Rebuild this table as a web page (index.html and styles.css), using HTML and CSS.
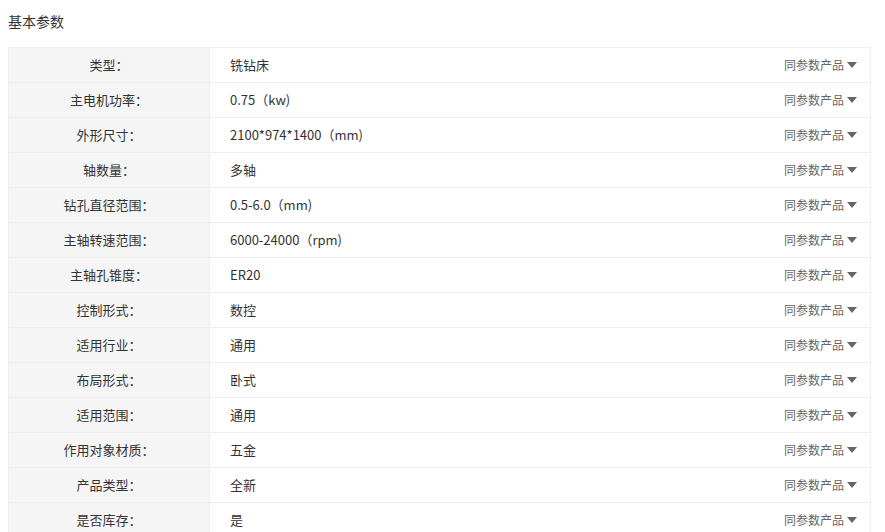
FILE: index.html
```html
<!DOCTYPE html>
<html lang="zh">
<head>
<meta charset="utf-8">
<link rel="stylesheet" href="styles.css">
</head>
<body>
<div class="title">基本参数</div>
<table class="params">
<tr><td class="k">类型：</td><td class="v"><span>铣钻床</span><span class="same">同参数产品<i class="tri"></i></span></td></tr>
<tr><td class="k">主电机功率：</td><td class="v"><span>0.75（kw)</span><span class="same">同参数产品<i class="tri"></i></span></td></tr>
<tr><td class="k">外形尺寸：</td><td class="v"><span>2100*974*1400（mm)</span><span class="same">同参数产品<i class="tri"></i></span></td></tr>
<tr><td class="k">轴数量：</td><td class="v"><span>多轴</span><span class="same">同参数产品<i class="tri"></i></span></td></tr>
<tr><td class="k">钻孔直径范围：</td><td class="v"><span>0.5-6.0（mm)</span><span class="same">同参数产品<i class="tri"></i></span></td></tr>
<tr><td class="k">主轴转速范围：</td><td class="v"><span>6000-24000（rpm)</span><span class="same">同参数产品<i class="tri"></i></span></td></tr>
<tr><td class="k">主轴孔锥度：</td><td class="v"><span>ER20</span><span class="same">同参数产品<i class="tri"></i></span></td></tr>
<tr><td class="k">控制形式：</td><td class="v"><span>数控</span><span class="same">同参数产品<i class="tri"></i></span></td></tr>
<tr><td class="k">适用行业：</td><td class="v"><span>通用</span><span class="same">同参数产品<i class="tri"></i></span></td></tr>
<tr><td class="k">布局形式：</td><td class="v"><span>卧式</span><span class="same">同参数产品<i class="tri"></i></span></td></tr>
<tr><td class="k">适用范围：</td><td class="v"><span>通用</span><span class="same">同参数产品<i class="tri"></i></span></td></tr>
<tr><td class="k">作用对象材质：</td><td class="v"><span>五金</span><span class="same">同参数产品<i class="tri"></i></span></td></tr>
<tr><td class="k">产品类型：</td><td class="v"><span>全新</span><span class="same">同参数产品<i class="tri"></i></span></td></tr>
<tr><td class="k">是否库存：</td><td class="v"><span>是</span><span class="same">同参数产品<i class="tri"></i></span></td></tr>
</table>
</body>
</html>
```
FILE: styles.css
```css
html, body {
  margin: 0;
  padding: 0;
  background: #fff;
}
body {
  padding: 8px;
  font-family: "Microsoft YaHei", "Noto Sans CJK SC", "Noto Sans", sans-serif;
  color: #333;
  font-size: 13px;
}
.title {
  font-size: 14px;
  line-height: 26px;
  margin-bottom: 13px;
  color: #333;
}
.params {
  width: 863px;
  border-collapse: collapse;
  table-layout: fixed;
}
.params td {
  border: 1px solid #eeeeee;
  height: 34px;
  padding: 0;
  line-height: 20px;
}
.params td.k {
  width: 200px;
  background: #f5f5f5;
  text-align: center;
  color: #333;
}
.params td.v {
  padding: 0 13px 0 20px;
}
.v {
  color: #333;
}
.v > span:first-child {
  float: left;
}
.same {
  float: right;
  color: #666;
  font-size: 12px;
  display: flex;
  align-items: center;
}
.tri {
  display: inline-block;
  width: 0;
  height: 0;
  margin-left: 3px;
  border-left: 5px solid transparent;
  border-right: 5px solid transparent;
  border-top: 6px solid #666;
}
```
